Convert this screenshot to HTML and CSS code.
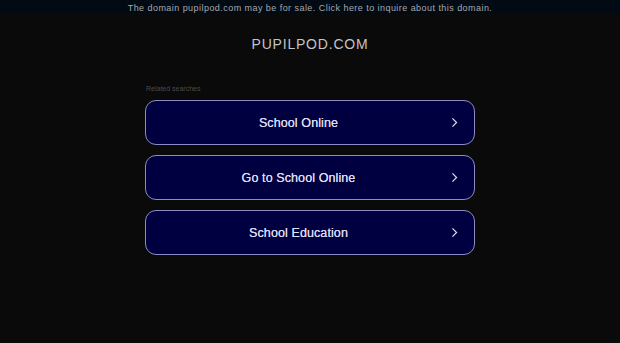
FILE: index.html
```html
<!DOCTYPE html>
<html lang="en">
<head>
    <meta charset="UTF-8">
    <meta name="viewport" content="width=device-width, initial-scale=1.0">
    <title>pupilpod.com</title>
    <link rel="stylesheet" href="styles.css">
</head>
<body>
    <div class="sale-bar">
        <a href="#">The domain pupilpod.com may be for sale. Click here to inquire about this domain.</a>
    </div>
    <main>
        <h1 class="domain">PUPILPOD.COM</h1>
        <div class="related">
            <p class="related-title">Related searches</p>
            <!-- search links -->
            <a class="search-link" href="#">
                <span class="label">School Online</span>
                <svg class="arrow" viewBox="0 0 10 16" width="7" height="11"><path d="M2 2l6 6-6 6" fill="none" stroke="currentColor" stroke-width="1.8"/></svg>
            </a>
            <a class="search-link" href="#">
                <span class="label">Go to School Online</span>
                <svg class="arrow" viewBox="0 0 10 16" width="7" height="11"><path d="M2 2l6 6-6 6" fill="none" stroke="currentColor" stroke-width="1.8"/></svg>
            </a>
            <a class="search-link" href="#">
                <span class="label">School Education</span>
                <svg class="arrow" viewBox="0 0 10 16" width="7" height="11"><path d="M2 2l6 6-6 6" fill="none" stroke="currentColor" stroke-width="1.8"/></svg>
            </a>
        </div>
    </main>
</body>
</html>
```

FILE: styles.css
```css
body {
    font-family: "Liberation Sans", Arial, sans-serif;
    margin: 0;
    padding: 0;
    background-color: #0a0a0a;
}

.sale-bar {
    height: 13px;
    background-color: #020a14;
    text-align: center;
    line-height: 12px;
}

.sale-bar a {
    color: #a8a8a8;
    font-size: 9px;
    letter-spacing: 0.45px;
    text-decoration: none;
}

main {
    width: 330px;
    margin: 0 auto;
}

.domain {
    margin: 23px 0 0;
    text-align: center;
    color: #c4c4c4;
    font-size: 14px;
    font-weight: normal;
    letter-spacing: 0.8px;
    line-height: 16px;
}

.related {
    margin-top: 33px;
}

.related-title {
    margin: 0 0 7px 1px;
    color: #4a4a4a;
    font-size: 7px;
    line-height: 8px;
}

.search-link {
    display: flex;
    align-items: center;
    height: 43px;
    padding-right: 16px;
    margin-bottom: 10px;
    border: 1px solid #8c8cc4;
    border-radius: 11px;
    background-color: #000040;
    color: #dcdcf4;
    font-size: 12.5px;
    letter-spacing: 0.1px;
    text-decoration: none;
    text-shadow: 0 0 0.4px #dcdcf4;
}

.label {
    flex: 1;
    text-align: center;
}

.arrow {
    flex-shrink: 0;
}
```
